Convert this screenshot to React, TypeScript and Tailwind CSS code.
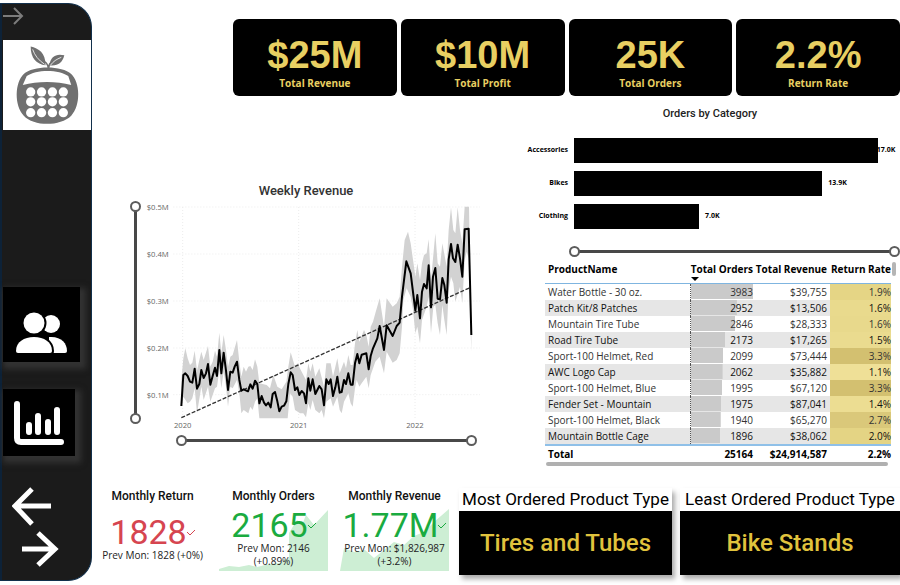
import React from "react";

const SEGOE = "font-['Open_Sans','Noto_Sans',sans-serif]";
const DIN = "font-['Roboto','Liberation_Sans',sans-serif]";

const kpis = [
  { value: "$25M", label: "Total Revenue" },
  { value: "$10M", label: "Total Profit" },
  { value: "25K", label: "Total Orders" },
  { value: "2.2%", label: "Return Rate" },
];

const categories = [
  { name: "Accessories", value: 17.0 },
  { name: "Bikes", value: 13.9 },
  { name: "Clothing", value: 7.0 },
];

const products = [
  { name: "Water Bottle - 30 oz.", orders: 3983, revenue: "$39,755", rate: "1.9%", bar: 100, tint: "bg-[#e5d585]" },
  { name: "Patch Kit/8 Patches", orders: 2952, revenue: "$13,506", rate: "1.6%", bar: 74, tint: "bg-[#e9da8d]" },
  { name: "Mountain Tire Tube", orders: 2846, revenue: "$28,333", rate: "1.6%", bar: 71, tint: "bg-[#e8d98c]" },
  { name: "Road Tire Tube", orders: 2173, revenue: "$17,265", rate: "1.5%", bar: 55, tint: "bg-[#eadb8f]" },
  { name: "Sport-100 Helmet, Red", orders: 2099, revenue: "$73,444", rate: "3.3%", bar: 52, tint: "bg-[#d3c070]" },
  { name: "AWC Logo Cap", orders: 2062, revenue: "$35,882", rate: "1.1%", bar: 51, tint: "bg-[#efe097]" },
  { name: "Sport-100 Helmet, Blue", orders: 1995, revenue: "$67,120", rate: "3.3%", bar: 50, tint: "bg-[#d3c070]" },
  { name: "Fender Set - Mountain", orders: 1975, revenue: "$87,041", rate: "1.4%", bar: 49, tint: "bg-[#ecdd92]" },
  { name: "Sport-100 Helmet, Black", orders: 1940, revenue: "$65,270", rate: "2.7%", bar: 48, tint: "bg-[#dac87a]" },
  { name: "Mountain Bottle Cage", orders: 1896, revenue: "$38,062", rate: "2.0%", bar: 47, tint: "bg-[#e4d484]" },
];

const revenueLine =
  "184,678 190,585 196,580 203,588 210,605 217,608 224,566 231,626 238,612 244,570 251,594 258,580 264,552 271,614 278,588 285,563 291,588 298,510 304,580 311,518 318,572 324,630 331,575 338,578 344,560 351,545 358,600 364,632 371,628 384,634 391,613 398,626 405,602 412,612 418,670 425,648 432,668 438,676 445,668 452,682 458,642 465,636 472,664 478,694 485,680 492,677 499,664 505,612 512,577 518,585 525,630 532,622 538,645 545,633 552,640 558,670 565,595 571,632 578,598 586,642 598,618 605,628 612,676 619,598 626,612 632,598 639,648 646,622 652,590 659,638 665,636 672,600 678,612 685,580 692,614 698,614 705,550 712,522 718,550 725,524 739,520 746,568 752,528 759,505 772,475 779,438 792,510 800,436 818,468 830,438 839,428 846,350 859,244 872,280 886,392 892,345 900,415 906,335 912,312 920,325 926,256 933,382 939,290 946,264 953,356 960,358 967,294 973,315 980,368 986,238 993,192 999,235 1006,246 1013,194 1020,235 1027,290 1034,148 1046,146 1054,465";

const revenueBand =
  "184,600 190,535 196,505 203,535 210,555 217,548 224,512 231,572 238,540 244,515 251,540 264,498 271,560 278,545 285,512 291,530 298,458 304,520 311,465 318,510 324,560 331,530 338,525 351,480 358,545 364,590 371,560 378,575 385,560 391,558 398,570 405,538 412,560 418,610 440,615 450,625 460,585 472,620 485,628 499,605 505,560 512,517 525,560 532,550 545,575 558,600 565,550 571,575 578,550 586,590 598,565 612,620 619,550 632,550 639,590 652,535 659,580 672,545 678,565 685,525 692,555 698,555 705,490 712,450 718,485 732,450 739,465 746,500 752,440 759,425 766,400 779,355 792,440 800,355 818,380 830,370 839,350 846,260 854,180 864,155 872,190 882,260 886,290 892,250 900,300 906,250 912,225 920,220 926,178 933,300 946,160 953,250 960,260 967,190 980,260 986,150 993,82 1000,150 1006,160 1013,82 1020,150 1027,190 1034,80 1047,80 1052,380 1054,420 1054,515 1050,400 1046,235 1040,215 1034,240 1027,370 1020,320 1006,365 1000,310 993,290 986,330 980,465 973,420 967,375 960,465 953,430 946,375 940,380 933,460 926,350 920,380 906,420 900,490 892,440 886,460 879,390 872,350 860,325 850,360 846,440 839,520 830,540 818,548 800,515 792,580 779,530 766,545 752,585 746,625 739,590 725,610 718,620 710,600 705,625 698,680 692,670 685,640 672,665 665,700 659,690 652,650 639,680 632,655 619,665 612,715 605,690 598,700 586,690 578,660 571,690 565,670 558,712 550,700 540,700 525,690 518,650 510,640 503,715 418,715 412,655 405,665 398,690 391,680 385,700 371,690 364,700 358,640 351,600 338,625 331,620 324,680 318,620 311,575 304,625 298,570 291,620 285,625 271,665 264,620 251,660 244,620 231,700 224,625 217,655 210,665 203,670 190,650 184,678";

const yTicks = [
  { label: "$0.5M", y: 81 },
  { label: "$0.4M", y: 222 },
  { label: "$0.3M", y: 363 },
  { label: "$0.2M", y: 504 },
  { label: "$0.1M", y: 644 },
];
const xTicks = [
  { label: "2020", x: 188 },
  { label: "2021", x: 536 },
  { label: "2022", x: 885 },
];

const THUMB =
  "appearance-none bg-transparent pointer-events-none [&::-webkit-slider-thumb]:appearance-none [&::-webkit-slider-thumb]:pointer-events-auto [&::-webkit-slider-thumb]:box-border [&::-webkit-slider-thumb]:size-[11px] [&::-webkit-slider-thumb]:rounded-full [&::-webkit-slider-thumb]:border-2 [&::-webkit-slider-thumb]:border-solid [&::-webkit-slider-thumb]:border-[#5c5c5c] [&::-webkit-slider-thumb]:bg-white";

function RangeSlider({ label, vertical = false }: { label: string; vertical?: boolean }) {
  const input = vertical
    ? `${THUMB} absolute inset-0 m-0 h-full w-[11px] [writing-mode:vertical-lr] [direction:rtl]`
    : `${THUMB} absolute inset-0 m-0 h-[11px] w-full`;
  return (
    <div className={vertical ? "relative flex w-[11px] justify-center self-stretch py-1" : "relative flex h-[11px] items-center px-1"}>
      <div className={vertical ? "w-[3px] bg-[#484848]" : "h-[3px] w-full bg-[#484848]"} />
      <input type="range" aria-label={`${label} minimum`} defaultValue={0} className={input} />
      <input type="range" aria-label={`${label} maximum`} defaultValue={100} className={input} />
    </div>
  );
}

function Logo() {
  return (
    <svg viewBox="0 0 89 90" className="h-[90px] w-full" role="img" aria-label="Logo">
      <g fill="#707070">
        <path d="M28 6c8 2 15 6 15 19-9-1-15-7-15-19Z" />
        <path d="M47 25c1-9 7-12 15-10-2 8-7 11-15 10Z" />
        <path d="M42 22c2 2 3 4 3 6h2c0-2 1-4 3-6l-1-1c-2 1-3 3-3 4-1-2-2-3-3-4Z" />
        <path
          fillRule="evenodd"
          d="M21 34C30 25 60 25 69 34c9 8 10 32 0 42-11 11-38 11-48 0-10-10-9-34 0-42Zm3 2-4 9c15-4 34-4 49 0l-3-9c-9-7-33-7-42 0Z"
        />
      </g>
      <g fill="none" stroke="#fff" strokeWidth=".8">
        <path d="M30 9c2 6 6 11 12 15M59 17c-5 2-8 4-11 8" />
      </g>
      <g fill="#fff">
        {[52, 62, 73].map((y) => [28, 39, 50, 61].map((x) => <circle key={`${x}-${y}`} cx={x} cy={y} r="4.7" />))}
      </g>
    </svg>
  );
}

function Sidebar() {
  const tile = "flex items-center justify-center bg-black shadow-[3px_4px_6px_3px_#333333]";
  return (
    <aside className="mt-[3px] mb-1 flex w-[92px] shrink-0 flex-col overflow-hidden rounded-r-3xl border-y border-r border-[#12304c] bg-[#1b1b1b]">
      <div className="flex flex-1 flex-col border-l-2 border-[#0d2238] pl-px">
        <button aria-label="Forward" className="flex h-9 items-start pt-[3px] text-[#7c7c7c]">
          <svg width="22" height="18" viewBox="0 0 22 18" fill="none" stroke="currentColor" strokeWidth="2">
            <path d="M0 9h18M11 1l8 8-8 8" />
          </svg>
        </button>
        <div className="bg-white">
          <Logo />
        </div>
        <nav aria-label="Report pages" className="mt-auto flex flex-col items-start">
          <button aria-label="Customers" className={`h-[75px] w-[77px] pt-[17px] ${tile}`}>
            <svg width="52" height="42" viewBox="0 0 52 42" fill="#fff">
              <circle cx="35" cy="12" r="9" />
              <path d="M33 25C45 24 51 31 51 39q0 2-2 2H33Z" />
              <g stroke="#000" strokeWidth="4" style={{ paintOrder: "stroke" }}>
                <circle cx="18" cy="11" r="10.5" />
                <path d="M0 39c0-9 8-14 18-14s18 5 18 14q0 2-2 2H2q-2 0-2-2Z" />
              </g>
            </svg>
          </button>
          <button aria-label="Charts" className={`mt-[27px] h-[67px] w-[72px] ${tile}`}>
            <svg width="50" height="44" viewBox="0 0 50 44" fill="none" stroke="#fff" strokeWidth="6" strokeLinecap="round" strokeLinejoin="round">
              <path d="M3 3v34q0 4 4 4h40" />
              <path d="M15 24v7M24 15v16M34 21v10M43 9v22" />
            </svg>
          </button>
          <button aria-label="Previous page" className="mt-[30px] ml-[9px]">
            <svg width="40" height="40" viewBox="0 0 40 40" fill="none" stroke="#fff" strokeWidth="5">
              <path d="M39 20H4M20 3 3 20l17 18" />
            </svg>
          </button>
          <button aria-label="Next page" className="mt-1 mb-3 ml-[19px]">
            <svg width="37" height="38" viewBox="0 0 37 38" fill="none" stroke="#fff" strokeWidth="5">
              <path d="M0 19h32M16 3l17 16-17 16" />
            </svg>
          </button>
        </nav>
      </div>
    </aside>
  );
}

function WeeklyRevenue() {
  return (
    <section className="flex flex-col justify-end pb-5 pl-[38px]">
      <h2 className={`text-center text-[13px] leading-4 font-medium text-[#333] ${DIN}`}>Weekly Revenue</h2>
      <div className="flex">
        <div className="flex pt-[2px] pb-[11px]">
          <RangeSlider label="Revenue" vertical />
        </div>
        <svg viewBox="66 57 1020 708" className="ml-px min-w-0 flex-1" role="img" aria-label="Weekly revenue, 2020 to 2022">
          <g stroke="#ececec" strokeWidth="3" strokeDasharray="3 6">
            {yTicks.map((t) => (
              <path key={t.label} d={`M160 ${t.y}H1080`} />
            ))}
            {xTicks.map((t) => (
              <path key={t.label} d={`M${t.x} 81V715`} />
            ))}
          </g>
          <polygon points={revenueBand} fill="#d2d2d2" />
          <path d="M184 713 1050 323" stroke="#333" strokeWidth="4" strokeDasharray="12 5" />
          <polyline points={revenueLine} fill="none" stroke="#000" strokeWidth="6" strokeLinejoin="round" />
          <g className={`text-[23px] ${SEGOE}`} fill="#666">
            {yTicks.map((t) => (
              <text key={t.label} x="146" y={t.y + 9} textAnchor="end">
                {t.label}
              </text>
            ))}
            {xTicks.map((t) => (
              <text key={t.label} x={t.x} y="744" textAnchor="middle">
                {t.label}
              </text>
            ))}
          </g>
        </svg>
      </div>
      <div className="mr-[5px] ml-[46px]">
        <RangeSlider label="Date" />
      </div>
    </section>
  );
}

function OrdersByCategory() {
  return (
    <section>
      <h2 className={`text-center text-[11px] leading-4 font-medium text-[#222] ${DIN}`}>Orders by Category</h2>
      <div className="mt-4 flex flex-col gap-2">
        {categories.map((c) => (
          <div key={c.name} className={`flex h-[25px] items-center text-[7px] font-bold text-black ${SEGOE}`}>
            <span className="w-[54px] shrink-0 pr-[6px] text-right">{c.name}</span>
            <div className="flex h-full flex-1 items-center">
              <div className="h-full bg-black" style={{ width: `${(c.value / 18.25) * 100}%` }} />
              <span className={c.value === 17 ? "-ml-px" : "ml-[6px]"}>{c.value.toFixed(1)}K</span>
            </div>
          </div>
        ))}
      </div>
      <div className="mt-[17px] ml-[49px]">
        <RangeSlider label="Orders" />
      </div>
    </section>
  );
}

function ProductTable() {
  return (
    <section className={`mt-1 ml-[25px] ${SEGOE}`}>
      <div className="flex items-start gap-px">
        <table className="flex-1 table-fixed border-collapse text-right text-[10px] text-[#333]">
          <colgroup>
            <col />
            <col className="w-[61px]" />
            <col className="w-[77px]" />
            <col className="w-[61px]" />
          </colgroup>
          <thead>
            <tr className="h-[22px] border-b border-[#7fb5e0] align-top leading-4 text-black">
              <th className="pl-[3px] text-left font-bold">ProductName</th>
              <th className="font-bold whitespace-nowrap" aria-sort="descending">
                <button className="block w-full text-right">
                  Total Orders
                  <svg width="8" height="4" viewBox="0 0 8 4" className="block" aria-hidden="true">
                    <path d="M0 0h8L4 4Z" />
                  </svg>
                </button>
              </th>
              <th className="pr-[3px] font-bold whitespace-nowrap">Total Revenue</th>
              <th className="font-bold whitespace-nowrap">Return Rate</th>
            </tr>
          </thead>
          <tbody>
            {products.map((p) => (
              <tr key={p.name} className="h-4 leading-4 even:bg-[#e6e6e6] even:text-[#111]">
                <td className="pl-[3px] text-left whitespace-nowrap">{p.name}</td>
                <td
                  className="border-l border-dotted border-[#555] bg-gradient-to-r from-[#cacaca] to-[#cacaca] bg-no-repeat"
                  style={{ backgroundSize: `${p.bar}% 15px` }}
                >
                  {p.orders}
                </td>
                <td className="pr-[3px]">{p.revenue}</td>
                <td className={p.tint}>{p.rate}</td>
              </tr>
            ))}
          </tbody>
          <tfoot>
            <tr className="h-[17px] border-t-2 border-[#8fc0e8] leading-4 font-bold text-black">
              <td className="pl-[3px] text-left">Total</td>
              <td>25164</td>
              <td className="pr-[3px]">$24,914,587</td>
              <td>2.2%</td>
            </tr>
          </tfoot>
        </table>
        <div className="mt-px mr-1 h-[14px] w-1 rounded-full bg-[#b5b5b5]" />
      </div>
      <div className="mr-3 ml-px h-1 rounded-full bg-[#b0b0b0]" />
    </section>
  );
}

type MonthlyProps = { title: string; value: string; note: string; tone: string; area?: string; offset: string };

function MonthlyKpi({ title, value, note, tone, area, offset }: MonthlyProps) {
  return (
    <section className="px-[6px] text-center">
      <h2 className={`text-xs leading-4 font-medium whitespace-nowrap text-[#111] ${DIN}`}>{title}</h2>
      <div className="relative h-[67px]">
        {area && (
          <svg viewBox="0 0 109 63" preserveAspectRatio="none" className="absolute inset-x-0 bottom-0 h-[63px] w-full" aria-hidden="true">
            <path d={area} fill="#cdeed4" />
          </svg>
        )}
        <div className={`relative ${offset}`}>
          <div className={`flex items-center justify-center leading-[34px] ${tone} ${DIN}`}>
            <span className="text-[34px]">{value}</span>
            <svg width="8" height="7" viewBox="0 0 8 7" fill="none" stroke="currentColor" aria-hidden="true">
              <path d="m0 3 3 3 5-5" />
            </svg>
          </div>
          <p className={`text-[10px] leading-[13px] text-[#222] ${SEGOE}`}>{note}</p>
        </div>
      </div>
    </section>
  );
}

function ProductTypeCard({ title, value }: { title: string; value: string }) {
  return (
    <section className={`text-center shadow-[3px_4px_5px_#aaaaaa] ${DIN}`}>
      <h2 className="bg-white text-[17px] leading-[23px] whitespace-nowrap text-black">{title}</h2>
      <p className="bg-black text-2xl leading-[64px] font-medium whitespace-nowrap text-[#e0c33d]">{value}</p>
    </section>
  );
}

export default function App() {
  return (
    <div className="flex min-h-screen bg-white">
      <Sidebar />
      <main className="flex min-w-0 flex-1 flex-col">
        <div className="mt-[19px] ml-[141px] grid grid-cols-4 gap-1">
          {kpis.map((k) => (
            <section key={k.label} className="rounded-md bg-black pt-4 pb-[5px] text-center text-[#e8cf62]">
              <p className="font-['Liberation_Sans',sans-serif] text-[38px] leading-[40px] font-bold">{k.value}</p>
              <h2 className={`text-[10px] leading-4 font-bold ${SEGOE}`}>{k.label}</h2>
            </section>
          ))}
        </div>
        <div className="mt-[10px] grid grid-cols-[390fr_418fr]">
          <WeeklyRevenue />
          <div className="flex flex-col pl-[38px]">
            <OrdersByCategory />
            <ProductTable />
          </div>
        </div>
        <div className="mt-auto mb-[10px] grid grid-cols-[363fr_441fr] gap-1">
          <div className="grid grid-cols-3">
            <MonthlyKpi title="Monthly Return" value="1828" note="Prev Mon: 1828 (+0%)" tone="text-[#d64550]" offset="pt-[11px]" />
            <MonthlyKpi
              title="Monthly Orders"
              value="2165"
              note="Prev Mon: 2146 (+0.89%)"
              tone="text-[#1aab40]"
              offset="pt-1"
              area="M0 63V61L10 58 20 59 30 57 38 59 50 56 60 55 70 50V25l8-13 5 5 4-10 8 10 14-15V63Z"
            />
            <MonthlyKpi
              title="Monthly Revenue"
              value="1.77M"
              note="Prev Mon: $1,826,987 (+3.2%)"
              tone="text-[#1aab40]"
              offset="pt-1"
              area="M0 63 4 40 14 44 25 42 34 50 44 42 54 34 64 37 74 28 84 24 94 14 109 1V63Z"
            />
          </div>
          <div className="grid grid-cols-[213fr_220fr] gap-2">
            <ProductTypeCard title="Most Ordered Product Type" value="Tires and Tubes" />
            <ProductTypeCard title="Least Ordered Product Type" value="Bike Stands" />
          </div>
        </div>
      </main>
    </div>
  );
}
